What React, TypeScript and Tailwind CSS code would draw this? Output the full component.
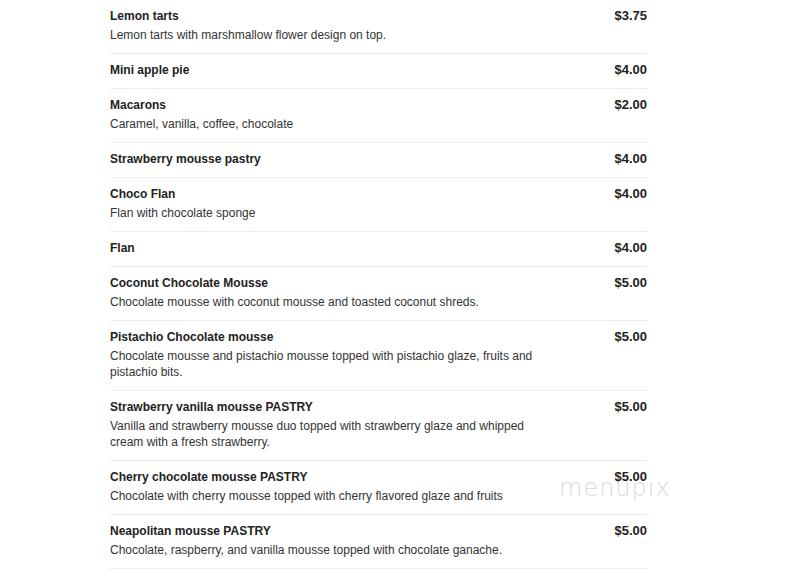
import React from 'react'

type Item = {
  name: string
  price: string
  desc?: string
}

const items: Item[] = [
  { name: 'Lemon tarts', price: '$3.75', desc: 'Lemon tarts with marshmallow flower design on top.' },
  { name: 'Mini apple pie', price: '$4.00' },
  { name: 'Macarons', price: '$2.00', desc: 'Caramel, vanilla, coffee, chocolate' },
  { name: 'Strawberry mousse pastry', price: '$4.00' },
  { name: 'Choco Flan', price: '$4.00', desc: 'Flan with chocolate sponge' },
  { name: 'Flan', price: '$4.00' },
  {
    name: 'Coconut Chocolate Mousse',
    price: '$5.00',
    desc: 'Chocolate mousse with coconut mousse and toasted coconut shreds.'
  },
  {
    name: 'Pistachio Chocolate mousse',
    price: '$5.00',
    desc: 'Chocolate mousse and pistachio mousse topped with pistachio glaze, fruits and pistachio bits.'
  },
  {
    name: 'Strawberry vanilla mousse PASTRY',
    price: '$5.00',
    desc: 'Vanilla and strawberry mousse duo topped with strawberry glaze and whipped cream with a fresh strawberry.'
  },
  {
    name: 'Cherry chocolate mousse PASTRY',
    price: '$5.00',
    desc: 'Chocolate with cherry mousse topped with cherry flavored glaze and fruits'
  },
  {
    name: 'Neapolitan mousse PASTRY',
    price: '$5.00',
    desc: 'Chocolate, raspberry, and vanilla mousse topped with chocolate ganache.'
  }
]

function MenuRow({ item }: { item: Item }) {
  return (
    <div className="flex justify-between border-b border-[#ececec] pt-2 pb-[10px]">
      <div className="w-[435px]">
        <div className="text-[12px] leading-4 font-bold text-[#222]">{item.name}</div>
        {item.desc && (
          <div className="mt-[3px] text-[12px] leading-4 text-[#333]">{item.desc}</div>
        )}
      </div>
      <div className="text-[13px] leading-4 font-bold text-[#222]">{item.price}</div>
    </div>
  )
}

export default function App() {
  return (
    <div
      className="relative h-[570px] w-[792px] overflow-hidden bg-white"
      style={{ fontFamily: '"Liberation Sans", Arial, sans-serif' }}>
      <div className="ml-[110px] w-[537px]">
        {items.map(item => (
          <MenuRow key={item.name} item={item} />
        ))}
      </div>
      <div
        className="pointer-events-none absolute left-[559px] top-[474px] text-[24px] leading-7 tracking-[1px] text-[#dadada]"
        style={{ fontFamily: '"DejaVu Sans", sans-serif', fontWeight: 200 }}>
        menupix
      </div>
    </div>
  )
}
